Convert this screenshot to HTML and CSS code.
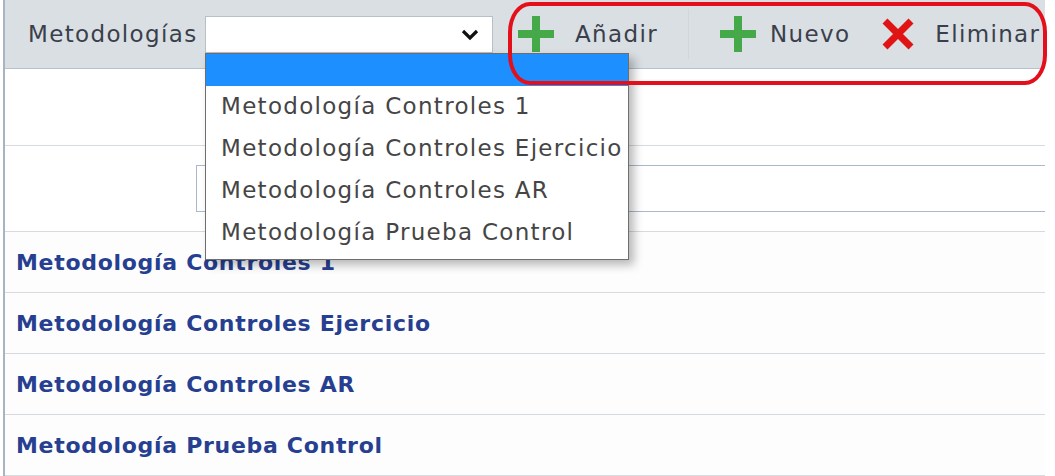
FILE: index.html
```html
<!DOCTYPE html>
<html lang="es">
<head>
    <meta charset="UTF-8">
    <title>Metodologías</title>
    <link rel="stylesheet" href="styles.css">
</head>
<body>
    <div class="panel">
        <div class="toolbar">
            <span class="tb-label">Metodologías</span>
            <div class="select">
                <svg class="chevron" width="18" height="12" viewBox="0 0 18 12"><polyline points="2,2 9,9 16,2" fill="none" stroke="#111" stroke-width="3.2"/></svg>
            </div>
            <button class="tb-btn btn-add">
                <svg width="36" height="36" viewBox="0 0 36 36"><rect x="14" y="0" width="8" height="36" fill="#45a94a"/><rect x="0" y="14" width="36" height="8" fill="#45a94a"/></svg>
                <span>Añadir</span>
            </button>
            <span class="sep"></span>
            <button class="tb-btn btn-new">
                <svg width="36" height="36" viewBox="0 0 36 36"><rect x="14" y="0" width="8" height="36" fill="#45a94a"/><rect x="0" y="14" width="36" height="8" fill="#45a94a"/></svg>
                <span>Nuevo</span>
            </button>
            <button class="tb-btn btn-del">
                <svg width="34" height="32" viewBox="0 0 34 32"><path d="M4 3 L30 29 M30 3 L4 29" stroke="#e01414" stroke-width="7"/></svg>
                <span>Eliminar</span>
            </button>
        </div>

        <div class="row row-filter"></div>
        <div class="row row-search">
            <div class="search-box"></div>
        </div>

        <div class="item">Metodología Controles 1</div>
        <div class="item">Metodología Controles Ejercicio</div>
        <div class="item">Metodología Controles AR</div>
        <div class="item">Metodología Prueba Control</div>

        <ul class="dropdown">
            <li class="selected"></li>
            <li>Metodología Controles 1</li>
            <li>Metodología Controles Ejercicio</li>
            <li>Metodología Controles AR</li>
            <li>Metodología Prueba Control</li>
        </ul>

        <div class="highlight"></div>
    </div>
</body>
</html>
```

FILE: styles.css
```css
body {
    margin: 0;
    background: #fff;
    font-family: 'DejaVu Sans', sans-serif;
    overflow: hidden;
}
.panel {
    position: relative;
    margin-left: 3px;
    width: 1040px;
    height: 476px;
    border-left: 2px solid #a8b4c2;
    background: #fdfdfe;
}
.toolbar {
    height: 68px;
    background: #d9dfe3;
    border-bottom: 1px solid #b4c1cf;
    display: flex;
    align-items: center;
    padding-left: 23px;
}
.tb-label {
    font-size: 23px;
    letter-spacing: 1.35px;
    color: #3b3f4c;
    width: 177px;
    white-space: nowrap;
}
.select {
    width: 286px;
    height: 35px;
    margin-top: 1px;
    background: #fff;
    border: 1px solid #b7c0c9;
    display: flex;
    align-items: center;
    justify-content: flex-end;
}
.chevron {
    margin-right: 13px;
}
.tb-btn {
    display: flex;
    align-items: center;
    background: none;
    border: none;
    padding: 0;
    font-family: inherit;
    font-size: 23px;
    letter-spacing: 1.35px;
    color: #3b3f4c;
}
.btn-add {
    margin-left: 25px;
}
.btn-add span {
    margin-left: 21px;
}
.sep {
    width: 1px;
    height: 50px;
    background: #cfd6dc;
    margin-left: 30px;
}
.btn-new {
    margin-left: 31px;
}
.btn-new span {
    margin-left: 14px;
}
.btn-del {
    margin-left: 31px;
}
.btn-del span {
    margin-left: 20px;
}
.row {
    border-bottom: 1px solid #d6dbe0;
    background: #fff;
}
.row-filter {
    height: 76px;
}
.row-search {
    height: 85px;
    display: flex;
    align-items: center;
    padding-left: 191px;
}
.search-box {
    flex: 1;
    height: 45px;
    border: 1px solid #a9b9cb;
    border-right: none;
    background: #fff;
}
.item {
    height: 60px;
    border-bottom: 1px solid #d6dbe0;
    display: flex;
    align-items: center;
    padding-left: 11px;
    font-size: 22px;
    font-weight: 700;
    letter-spacing: 0.7px;
    color: #273f90;
}
.dropdown {
    position: absolute;
    left: 200px;
    top: 53px;
    width: 422px;
    margin: 0;
    padding: 0 0 5px;
    list-style: none;
    background: #fff;
    border: 1px solid #6e6e6e;
    box-shadow: 5px 5px 9px rgba(0, 0, 0, 0.28);
}
.dropdown li {
    height: 42px;
    line-height: 40px;
    padding-left: 15px;
    font-size: 23px;
    letter-spacing: 1.3px;
    color: #454545;
    white-space: nowrap;
}
.dropdown li.selected {
    height: 32px;
    background: #1e8fff;
}
.highlight {
    position: absolute;
    left: 503px;
    right: -2px;
    top: 2px;
    height: 75px;
    border: 4px solid #e3101c;
    border-radius: 22px / 30px;
    pointer-events: none;
}
```
